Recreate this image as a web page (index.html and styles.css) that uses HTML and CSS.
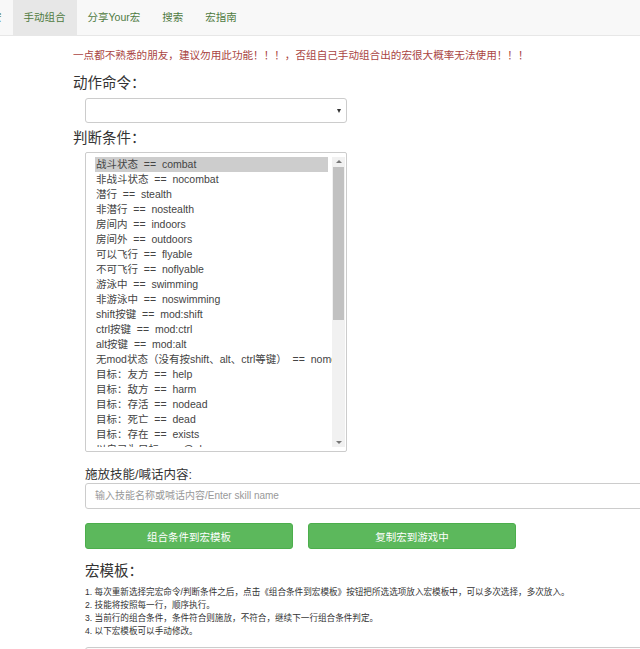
FILE: index.html
```html
<!DOCTYPE html>
<html lang="zh">
<head>
<meta charset="utf-8">
<title>手动组合</title>
<link rel="stylesheet" href="styles.css">
</head>
<body>
<nav class="nav">
  <ul class="tabs">
    <li class="tab">宏</li>
    <li class="tab active">手动组合</li>
    <li class="tab">分享Your宏</li>
    <li class="tab">搜索</li>
    <li class="tab">宏指南</li>
  </ul>
</nav>
<main class="page">
  <p class="warn">一点都不熟悉的朋友，建议勿用此功能！！！，否组自己手动组合出的宏很大概率无法使用！！！</p>
  <h3 class="heading">动作命令：</h3>
  <div class="field">
    <div class="select"><span class="caret"></span></div>
  </div>
  <h3 class="heading">判断条件：</h3>
  <div class="field">
    <div class="listbox">
      <ul class="options">
        <li class="opt selected">战斗状态 &nbsp;== &nbsp;combat</li>
        <li class="opt">非战斗状态 &nbsp;== &nbsp;nocombat</li>
        <li class="opt">潜行 &nbsp;== &nbsp;stealth</li>
        <li class="opt">非潜行 &nbsp;== &nbsp;nostealth</li>
        <li class="opt">房间内 &nbsp;== &nbsp;indoors</li>
        <li class="opt">房间外 &nbsp;== &nbsp;outdoors</li>
        <li class="opt">可以飞行 &nbsp;== &nbsp;flyable</li>
        <li class="opt">不可飞行 &nbsp;== &nbsp;noflyable</li>
        <li class="opt">游泳中 &nbsp;== &nbsp;swimming</li>
        <li class="opt">非游泳中 &nbsp;== &nbsp;noswimming</li>
        <li class="opt">shift按键 &nbsp;== &nbsp;mod:shift</li>
        <li class="opt">ctrl按键 &nbsp;== &nbsp;mod:ctrl</li>
        <li class="opt">alt按键 &nbsp;== &nbsp;mod:alt</li>
        <li class="opt">无mod状态（没有按shift、alt、ctrl等键） &nbsp;== &nbsp;nomod</li>
        <li class="opt">目标：友方 &nbsp;== &nbsp;help</li>
        <li class="opt">目标：敌方 &nbsp;== &nbsp;harm</li>
        <li class="opt">目标：存活 &nbsp;== &nbsp;nodead</li>
        <li class="opt">目标：死亡 &nbsp;== &nbsp;dead</li>
        <li class="opt">目标：存在 &nbsp;== &nbsp;exists</li>
        <li class="opt">以自己为目标 &nbsp;== &nbsp;@player</li>
        <li class="opt">以目标为目标 &nbsp;== &nbsp;@target</li>
      </ul>
      <div class="scrollbar">
        <span class="arrow up"></span>
        <div class="track"><div class="thumb"></div></div>
        <span class="arrow down"></span>
      </div>
    </div>
  </div>
  <div class="field">
    <label class="label">施放技能/喊话内容:</label>
    <div class="input">输入技能名称或喊话内容/Enter skill name</div>
  </div>
  <div class="field buttons">
    <button class="btn">组合条件到宏模板</button>
    <button class="btn">复制宏到游戏中</button>
  </div>
  <div class="field">
    <h3 class="heading sub">宏模板：</h3>
    <ol class="notes">
      <li>1. 每次重新选择完宏命令/判断条件之后，点击《组合条件到宏模板》按钮把所选选项放入宏模板中，可以多次选择，多次放入。</li>
      <li>2. 技能将按照每一行，顺序执行。</li>
      <li>3. 当前行的组合条件，条件符合则施放，不符合，继续下一行组合条件判定。</li>
      <li>4. 以下宏模板可以手动修改。</li>
    </ol>
    <div class="textarea"></div>
  </div>
</main>
</body>
</html>
```

FILE: styles.css
```css
* { box-sizing: border-box; }
html, body { margin: 0; padding: 0; }
body {
  width: 640px;
  height: 649px;
  overflow: hidden;
  background: #fff;
  font-family: "Liberation Sans", "Noto Sans CJK SC", sans-serif;
  color: #333;
}
.nav {
  height: 36px;
  background: #f8f8f8;
  border-bottom: 1px solid #e7e7e7;
  overflow: hidden;
}
.tabs {
  list-style: none;
  margin: 0 0 0 -20px;
  padding: 0;
  display: flex;
  height: 35px;
}
.tab {
  padding: 0 11px;
  font-size: 10.5px;
  line-height: 35px;
  color: #4f7a3f;
  white-space: nowrap;
}
.tab.active { background: #e7e7e7; }

.page { padding-left: 73px; }
.warn {
  margin: 11px 0 9px;
  font-size: 10.6px;
  line-height: 16px;
  color: #a94442;
  white-space: nowrap;
}
.heading {
  margin: 4px 0 0;
  font-size: 14.5px;
  font-weight: normal;
  line-height: 22px;
  color: #333;
}
.warn + .heading { margin-top: 0; }
.field { padding-left: 12px; }
.select {
  margin-top: 4px;
  width: 262px;
  height: 25px;
  border: 1px solid #ccc;
  border-radius: 3px;
  display: flex;
  align-items: center;
  justify-content: flex-end;
  padding-right: 5px;
}
.caret {
  width: 0; height: 0;
  border-left: 2.5px solid transparent;
  border-right: 2.5px solid transparent;
  border-top: 4px solid #333;
}
.listbox {
  margin-top: 3px;
  width: 262px;
  height: 300px;
  border: 1px solid #ccc;
  border-radius: 2px;
  display: flex;
  padding: 4px 0 4px 9px;
  overflow: hidden;
}
.options {
  list-style: none;
  margin: 0;
  padding: 0;
  flex: 1;
  overflow: hidden;
  min-width: 0;
}
.opt {
  font-size: 10.5px;
  line-height: 15px;
  color: #444;
  white-space: nowrap;
  padding-left: 1px;
}
.opt.selected { background: #cdcdcd; margin-right: 4px; }
.scrollbar {
  width: 13px;
  margin-right: 1px;
  display: flex;
  flex-direction: column;
  align-items: center;
  background: #f1f1f1;
}
.arrow {
  width: 0;
  height: 0;
  border-left: 3px solid transparent;
  border-right: 3px solid transparent;
}
.arrow.up { border-bottom: 3px solid #777; margin: 3px 0 2px; }
.arrow.down { border-top: 3px solid #777; margin: 2px 0 3px; }
.track { flex: 1; width: 100%; }
.thumb {
  margin: 2px 1px 0;
  height: 153px;
  background: #c1c1c1;
}
.label {
  display: block;
  margin-top: 16px;
  font-size: 12.5px;
  line-height: 15px;
  color: #333;
}
.input {
  width: 600px;
  height: 26px;
  border: 1px solid #ccc;
  border-radius: 3px;
  padding-left: 9px;
  font-size: 10px;
  line-height: 24px;
  color: #999;
  white-space: nowrap;
}
.buttons {
  display: flex;
  gap: 15px;
  margin-top: 14px;
}
.btn {
  width: 208px;
  height: 26px;
  border: 1px solid #4cae4c;
  border-radius: 3px;
  background: #5cb85c;
  color: #fff;
  font-family: inherit;
  font-size: 10.5px;
  padding: 0;
}
.heading.sub { margin: 11px 0 0; }
.notes {
  list-style: none;
  margin: 4px 0 0;
  padding: 0;
}
.notes li {
  font-size: 8.6px;
  line-height: 13px;
  color: #333;
  white-space: nowrap;
}
.textarea {
  margin-top: 9px;
  width: 600px;
  height: 60px;
  border: 1px solid #ccc;
  border-radius: 3px;
  background: #fcfcfc;
}
```
